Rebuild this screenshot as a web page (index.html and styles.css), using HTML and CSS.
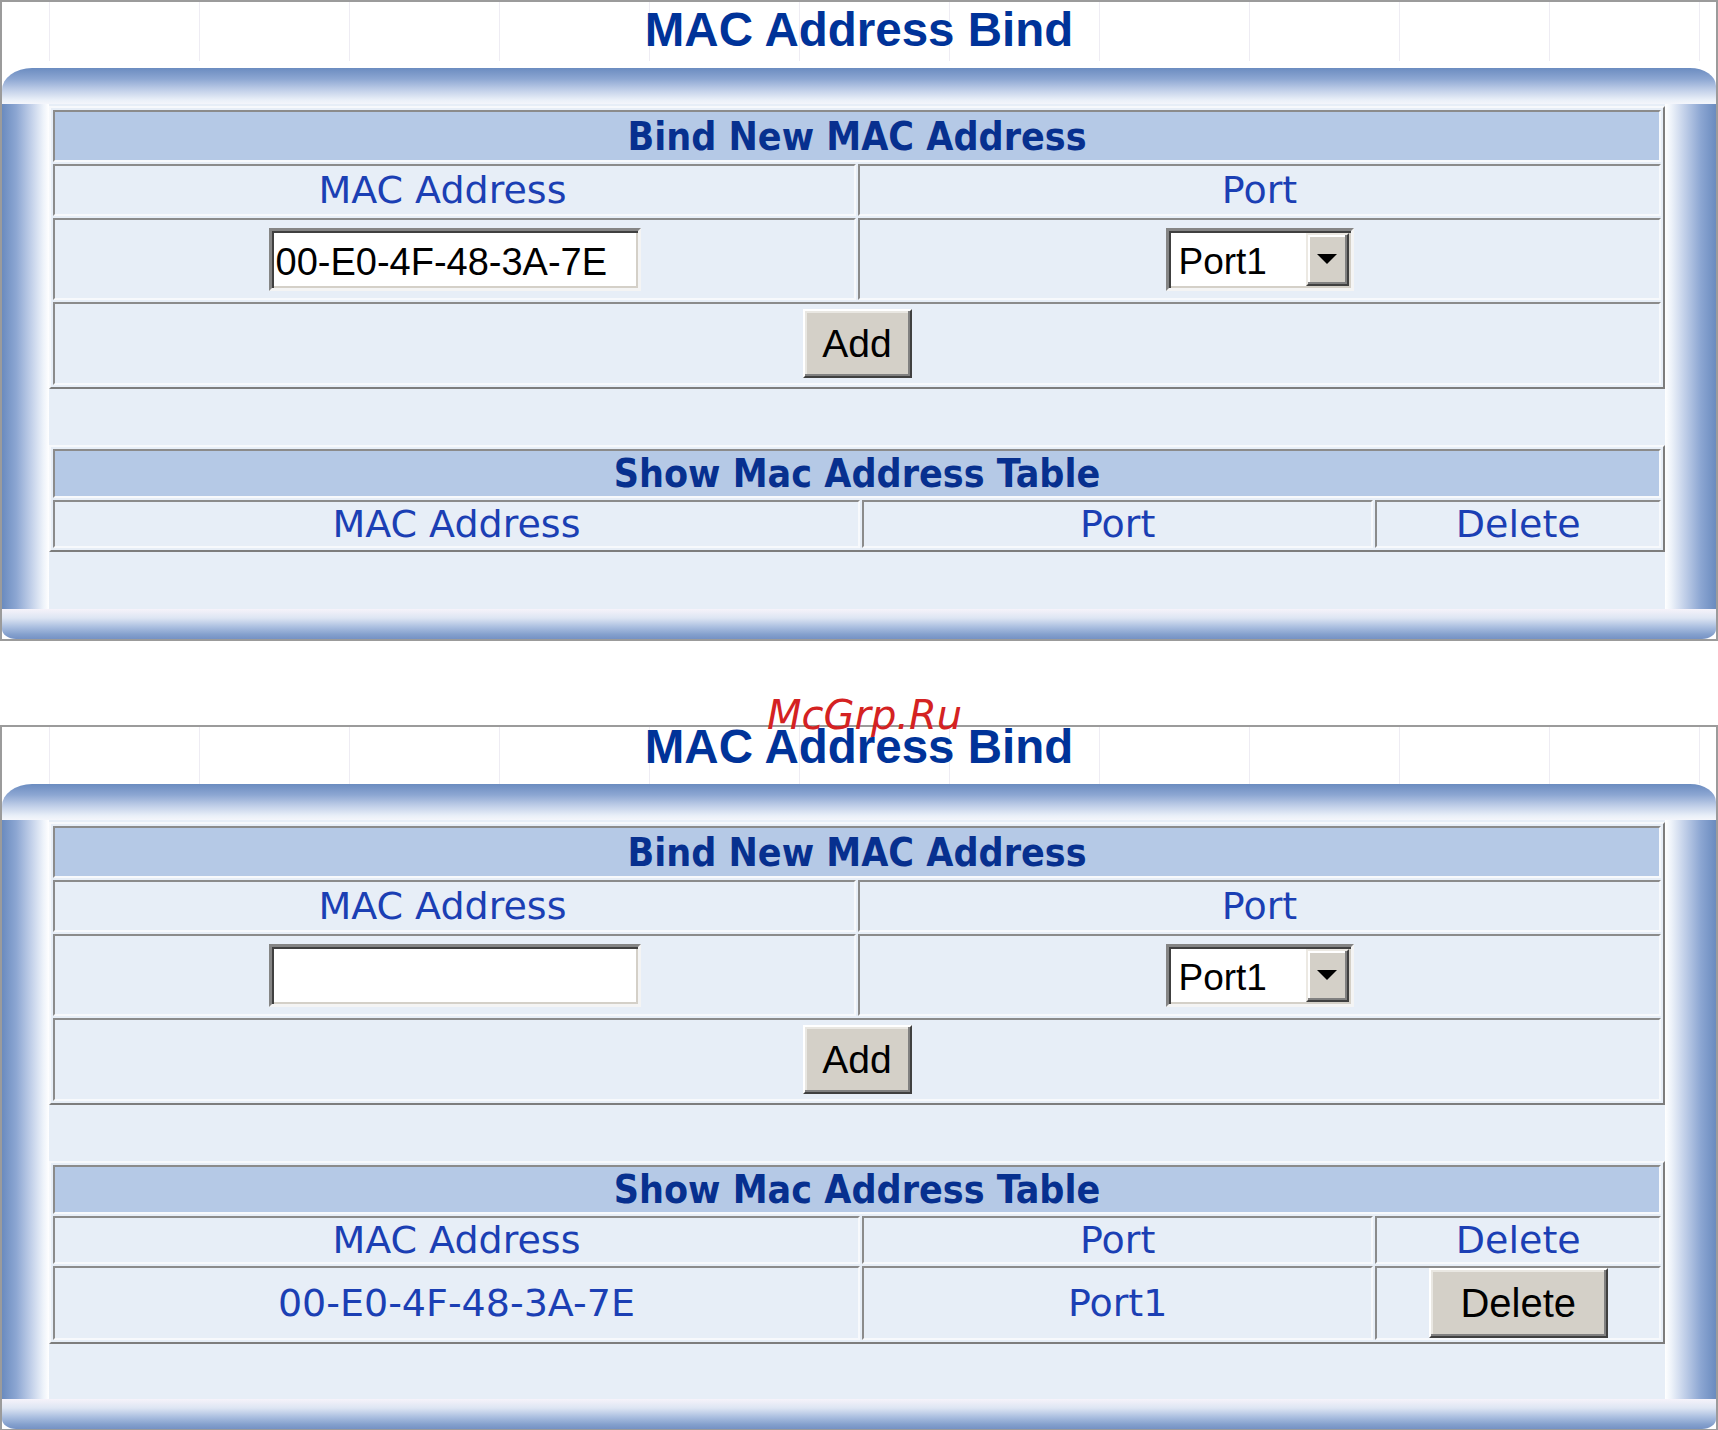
FILE: index.html
```html
<!DOCTYPE html>
<html lang="en">

<head>
  <meta charset="utf-8">
  <title>MAC Address Bind</title>
  <link rel="stylesheet" href="styles.css">
</head>

<body>
  <div class="panel">
    <div class="panel-head">
      <h1>MAC Address Bind</h1>
    </div>
    <div class="frame-top"></div>
    <div class="frame-body">
      <div class="side side-left"></div>
      <div class="content">
        <table class="grid">
          <tr class="row-caption">
            <td colspan="2" class="caption">Bind New MAC Address</td>
          </tr>
          <tr class="row-head">
            <td>MAC Address&nbsp;&nbsp;</td>
            <td>Port</td>
          </tr>
          <tr class="row-input">
            <td><input class="textbox" type="text" value="00-E0-4F-48-3A-7E"></td>
            <td>
              <div class="select">
                <span class="select-value">Port1</span>
                <span class="select-btn">
                  <svg width="20" height="10" viewBox="0 0 20 10"><polygon points="0,0 20,0 10,10" fill="black"/></svg>
                </span>
              </div>
            </td>
          </tr>
          <tr class="row-add">
            <td colspan="2"><button class="btn btn-add">Add</button></td>
          </tr>
        </table>
        <table class="grid">
          <colgroup>
            <col class="c-mac">
            <col class="c-port">
            <col class="c-del">
          </colgroup>
          <tr class="row-caption2">
            <td colspan="3" class="caption">Show Mac Address Table</td>
          </tr>
          <tr class="row-head2">
            <td>MAC Address</td>
            <td>Port</td>
            <td>Delete</td>
          </tr>
        </table>
      </div>
      <div class="side side-right"></div>
    </div>
    <div class="frame-bottom"></div>
  </div>

  <div class="panel panel-cut">
    <div class="panel-head">
      <h1>MAC Address Bind</h1>
    </div>
    <div class="frame-top"></div>
    <div class="frame-body">
      <div class="side side-left"></div>
      <div class="content">
        <table class="grid">
          <tr class="row-caption">
            <td colspan="2" class="caption">Bind New MAC Address</td>
          </tr>
          <tr class="row-head">
            <td>MAC Address&nbsp;&nbsp;</td>
            <td>Port</td>
          </tr>
          <tr class="row-input">
            <td><input class="textbox" type="text" value=""></td>
            <td>
              <div class="select">
                <span class="select-value">Port1</span>
                <span class="select-btn">
                  <svg width="20" height="10" viewBox="0 0 20 10"><polygon points="0,0 20,0 10,10" fill="black"/></svg>
                </span>
              </div>
            </td>
          </tr>
          <tr class="row-add">
            <td colspan="2"><button class="btn btn-add">Add</button></td>
          </tr>
        </table>
        <table class="grid">
          <colgroup>
            <col class="c-mac">
            <col class="c-port">
            <col class="c-del">
          </colgroup>
          <tr class="row-caption2">
            <td colspan="3" class="caption">Show Mac Address Table</td>
          </tr>
          <tr class="row-head2">
            <td>MAC Address</td>
            <td>Port</td>
            <td>Delete</td>
          </tr>
          <tr class="row-data">
            <td>00-E0-4F-48-3A-7E</td>
            <td>Port1</td>
            <td><button class="btn btn-delete">Delete</button></td>
          </tr>
        </table>
      </div>
      <div class="side side-right"></div>
    </div>
    <div class="frame-bottom"></div>
  </div>

  <div class="watermark">McGrp.Ru</div>
</body>

</html>
```

FILE: styles.css
```css
* {
    box-sizing: border-box;
}

body {
    margin: 0;
    position: relative;
    background-color: white;
    font-family: "DejaVu Sans", Verdana, sans-serif;
}

.panel {
    border: 2px solid #9b9b9b;
    background-color: white;
}

.panel + .panel {
    margin-top: 84px;
}

/* white strip with faint column lines */
.panel-head {
    height: 66px;
    padding-top: 1px;
    background-color: white;
    background-image: linear-gradient(90deg, #eeecf3 1px, transparent 1px);
    background-size: 150px 59px;
    background-repeat: repeat-x;
    background-position: 47px 0;
}

.panel-head h1 {
    margin: 0;
    text-align: center;
    font: bold 47.5px/54px "Liberation Sans", Arial, sans-serif;
    color: #003399;
}

.panel-cut .panel-head {
    height: 57px;
    padding-top: 0;
}

.panel-cut .panel-head h1 {
    line-height: 40px;
}

.frame-top {
    height: 36px;
    background: linear-gradient(#6b8cc0, #8ca6d2 30%, #c2d0e9 62%, #e9eff8 88%, #f4f6fb);
    border-radius: 30px 26px 0 0 / 22px 18px 0 0;
}

.frame-body {
    display: flex;
}

.side {
    flex: none;
}

.side-left {
    width: 47px;
    background: linear-gradient(90deg, #6a8bbf, #8ca6d2 30%, #c2d0e9 62%, #eef3fa 88%, #fff);
}

.side-right {
    width: 51px;
    background: linear-gradient(270deg, #6a8bbf, #8ca6d2 30%, #c2d0e9 62%, #eef3fa 88%, #fff);
}

.content {
    flex: 1;
    background-color: #e7eef7;
    padding: 2px 0 57px;
}

.panel-cut .content {
    padding-bottom: 55px;
}

.frame-bottom {
    height: 30px;
    background: linear-gradient(#f6f3fa, #dde5f3 30%, #abbfe0 60%, #84a0cd 85%, #7592c5);
    border-radius: 0 0 14px 14px / 0 0 10px 10px;
}

/* tables */
.grid {
    width: 100%;
    table-layout: fixed;
    border-collapse: separate;
    border-spacing: 2px;
    border: 2px solid;
    border-color: #f7f9fc #7d7d7d #7d7d7d #f7f9fc;
}

.grid + .grid {
    margin-top: 56px;
}

.grid td {
    border: 2px solid;
    border-color: #8b8b8b #f7f9fc #f7f9fc #8b8b8b;
    padding: 0;
    text-align: center;
    vertical-align: middle;
    font-size: 38px;
    color: #1b3fb4;
    white-space: nowrap;
}

.grid td.caption {
    background-color: #b5c9e6;
    font-family: "DejaVu Sans Condensed", "DejaVu Sans", sans-serif;
    font-stretch: condensed;
    font-weight: bold;
    font-size: 39px;
    color: #07308f;
}

.row-caption { height: 52px; }
.row-head { height: 52px; }
.row-input { height: 82px; }
.row-add { height: 83px; }
.row-caption2 { height: 47px; }
.row-head2 { height: 48px; }
.row-data { height: 75px; }

.panel-cut .row-head2 { height: 46px; }
.panel-cut .row-data { height: 74px; }

.c-mac { width: 50.3%; }
.c-port { width: 31.9%; }
.c-del { width: 17.8%; }

/* form controls */
.textbox {
    width: 372px;
    height: 63px;
    margin: 0;
    padding: 6px 4px 0;
    vertical-align: middle;
    border: 3px solid;
    border-color: #858585 #f4f4f4 #f4f4f4 #858585;
    box-shadow: inset 2px 2px 0 #404040, inset -2px -2px 0 #d4d0c8;
    background-color: white;
    font: 38px "Liberation Sans", Arial, sans-serif;
    color: black;
    outline: none;
}

.select {
    display: inline-flex;
    width: 188px;
    height: 63px;
    padding: 2px;
    vertical-align: middle;
    border: 3px solid;
    border-color: #858585 #f4f4f4 #f4f4f4 #858585;
    box-shadow: inset 2px 2px 0 #404040, inset -2px -2px 0 #d4d0c8;
    background-color: white;
}

.select-value {
    flex: 1;
    display: flex;
    align-items: center;
    padding: 6px 0 0 8px;
    font: 37px "Liberation Sans", Arial, sans-serif;
    color: black;
}

.select-btn {
    flex: none;
    width: 43px;
    display: flex;
    align-items: center;
    justify-content: center;
    background-color: #d4d0c8;
    border: 2px solid;
    border-color: #ece9e3 #404040 #404040 #ece9e3;
    box-shadow: inset -2px -2px 0 #808080, inset 2px 2px 0 #fff;
}

.btn {
    padding: 0;
    margin: 0;
    vertical-align: middle;
    background-color: #d4d0c8;
    border: 2px solid;
    border-color: #fff #404040 #404040 #fff;
    box-shadow: inset -2px -2px 0 #808080, inset 2px 2px 0 #e9e7e2;
    font: 39px "Liberation Sans", Arial, sans-serif;
    color: black;
}

.btn-add {
    width: 109px;
    height: 69px;
}

.btn-delete {
    width: 179px;
    height: 70px;
    font-size: 40px;
}

.watermark {
    position: absolute;
    left: 767px;
    top: 695px;
    font: oblique 40px/40px "DejaVu Sans", sans-serif;
    color: #d42222;
}
```
